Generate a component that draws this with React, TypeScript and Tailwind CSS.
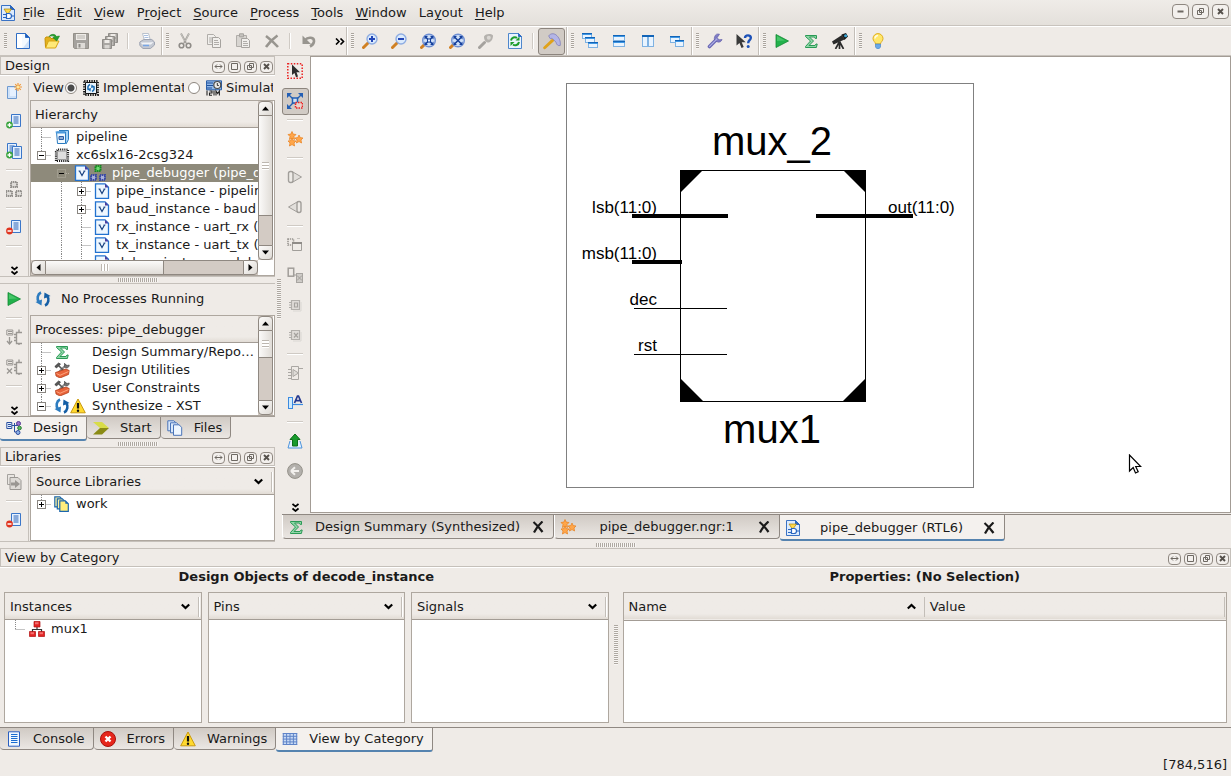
import React, { ReactNode } from "react";

type IconProps = { children: ReactNode; size?: string; box?: string };

function Svg({ children, size = "h-4 w-4", box = "0 0 16 16" }: IconProps) {
  return (
    <svg viewBox={box} className={`${size} block shrink-0`} fill="none" aria-hidden="true">
      {children}
    </svg>
  );
}

/* ---------- document and file icons ---------- */

const NewFile = () => (
  <Svg>
    <path d="M1.500.5h9l4 4v11h-13z" fill="#f4faff" stroke="#2f6dc4" />
    <path d="M2 1h5v14H2z" fill="#fff" />
    <path d="M8 15l6-8v8z" fill="#cfe2f8" />
    <path d="M10.500.5v4h4z" fill="#1d5fc0" stroke="#2f6dc4" />
  </Svg>
);
const OpenFolder = () => (
  <Svg>
    <path d="M1 5.500l1-1.500h4l1 1.500h5V14H1.500z" fill="#e3b21d" stroke="#c79006" />
    <path d="M1.500 15l3-7h10.500l-3.500 7z" fill="#ffe978" stroke="#d9a514" />
    <path d="M5 3.500C7.500.5 11 .8 12.500 3.500L15.500 3 12.800 8 8.800 4.500l2-.2C9.500 2.500 7.500 2.500 5 3.500z" fill="#25a02c" stroke="#14811c" strokeWidth=".6" />
  </Svg>
);
const Save = () => (
  <Svg>
    <path d="M.5.5h15v15h-14l-1-1z" fill="#a5a29e" stroke="#949089" />
    <path d="M3 1h10v6H3z" fill="#eeebe7" />
    <path d="M4 3h8M4 5h8" stroke="#b5b2ad" />
    <path d="M4 10h8v5.500H4z" fill="#dedbd7" />
    <path d="M5.500 11h2v3.500h-2z" fill="#8f8c88" />
  </Svg>
);
const Floppy = ({ x, y }: { x: number; y: number }) => (
  <g transform={`translate(${x} ${y})`}>
    <path d="M.5.5h9v9h-9z" fill="#a9a6a2" stroke="#8f8c88" />
    <path d="M2.500 1h5v3h-5z" fill="#eeebe7" />
    <path d="M2.500 6h5v3.500h-5z" fill="#d9d6d2" />
  </g>
);
const SaveAll = () => (
  <Svg>
    <Floppy x={6} y={0} />
    <Floppy x={3} y={3} />
    <Floppy x={0} y={6} />
  </Svg>
);
const Printer = () => (
  <Svg>
    <path d="M3.500.5h6l2 7h-6z" fill="#fff" stroke="#b9c1cc" />
    <path d="M5 2.500h4M5.500 4.500h4" stroke="#a9bfe0" />
    <path d="M.8 9l4-2.500h8l2.700 2.500v3l-4 3.500H4L.8 12.500z" fill="#c3c8d2" stroke="#9ea4b2" />
    <path d="M1.500 9.500h8.500l4.500-.5-2.500 2.500H3.500z" fill="#f1f3f7" />
    <path d="M4 12.500h6" stroke="#76a5e6" strokeWidth="1.500" />
  </Svg>
);
const Cut = () => (
  <Svg>
    <path d="M4 .5l5 9.500M12 .5L7 10" stroke="#a3a09c" strokeWidth="1.800" />
    <path d="M4 .5L7.500 8M12 .5L8.500 8" stroke="#d9d6d2" strokeWidth=".6" />
    <circle cx="4.500" cy="12.500" r="2.300" stroke="#8f8c88" strokeWidth="1.600" />
    <circle cx="11.500" cy="12.500" r="2.300" stroke="#8f8c88" strokeWidth="1.600" />
  </Svg>
);
const Copy = () => (
  <Svg>
    <path d="M1.500 1.500h6l2 2v8h-8z" fill="#f1efec" stroke="#b0ada9" />
    <path d="M3 5h4M3 7h3M3 9h3" stroke="#b0ada9" />
    <path d="M6.500 4.500h6l2 2v8h-8z" fill="#f1efec" stroke="#a6a39f" />
    <path d="M8 7.500h4M8 9.500h5M8 11.500h5" stroke="#b0ada9" />
  </Svg>
);
const Paste = () => (
  <Svg>
    <path d="M1.500 2.500h10v11h-10z" fill="#d8d5d1" stroke="#b0ada9" />
    <path d="M4.500.8h4v3h-4z" fill="#c6c3bf" stroke="#a6a39f" />
    <path d="M6.500 5.500h6l2 2v7h-8z" fill="#f1efec" stroke="#a6a39f" />
    <path d="M8 8.500h4M8 10.500h5M8 12.500h5" stroke="#b0ada9" />
  </Svg>
);
const DeleteX = () => (
  <Svg>
    <path d="M2 3c4 3 8 6.500 12 11M13.500 2.500C9 5.500 5.500 9 2 14" stroke="#98958f" strokeWidth="2.600" />
  </Svg>
);
const Undo = () => (
  <Svg>
    <path d="M4 7C7 3.500 13.500 4 13 8.500c-.3 2.500-2 4-4 5" stroke="#98958f" strokeWidth="2.600" />
    <path d="M1.500 2.500V11H10z" fill="#98958f" />
  </Svg>
);

/* ---------- magnifiers ---------- */

const Handle = ({ gray }: { gray?: boolean }) => (
  <path d="M1.500 14.500L6.500 9.500" stroke={gray ? "#a5a29e" : "#d08023"} strokeWidth="3" strokeLinecap="round" />
);
const ZoomIn = () => (
  <Svg>
    <Handle />
    <circle cx="10" cy="6" r="5" fill="#dbeafc" stroke="#8fade2" strokeWidth="1.400" />
    <path d="M10 3v6M7 6h6" stroke="#2347b8" strokeWidth="2" />
  </Svg>
);
const ZoomOut = () => (
  <Svg>
    <Handle />
    <circle cx="10" cy="6" r="5" fill="#dbeafc" stroke="#8fade2" strokeWidth="1.400" />
    <path d="M7 6h6" stroke="#2347b8" strokeWidth="2" />
  </Svg>
);
const ZoomFit = ({ small }: { small?: boolean }) => (
  <Svg>
    <path d="M1.500 14.500l2.500-2.500" stroke="#d08023" strokeWidth="3" strokeLinecap="round" />
    <circle cx="9" cy="7.500" r="6.300" fill="#cfe0f8" stroke="#6f8fd2" strokeWidth="1.400" />
    <path d="M5.500 4l7 7M12.500 4l-7 7" stroke="#16409c" strokeWidth="1.600" />
    <path d="M4.500 3h3.500l-3.500 3.500zM13.500 3v3.500L10 3zM4.500 12V8.500L8 12zM13.500 12H10l3.500-3.500z" fill="#16409c" />
    {!small && <path d="M7.500 6h3v3h-3z" fill="#e7f1ff" stroke="#16409c" />}
  </Svg>
);
const ZoomGray = () => (
  <Svg>
    <Handle gray />
    <path d="M6 3.500C8 .5 13 .5 15 2.500c0 3-1.500 6.500-4.500 7C8 9.500 6 7.500 6 3.500z" fill="#b5b2ae" />
    <circle cx="10.800" cy="4.800" r="2" fill="#dad7d3" />
  </Svg>
);
const RefreshDoc = () => (
  <Svg>
    <path d="M1.500.5h10l3 3v12h-13z" fill="#eaf4ff" stroke="#4f87cc" />
    <path d="M11.500.5v3h3z" fill="#2f6dc4" stroke="#2f6dc4" />
    <path d="M4 7.500C4.500 4.500 8 3.500 10 5M12 9c-.5 3-4 4-6 2.500" stroke="#1c9c2c" strokeWidth="2" />
    <path d="M8.500 7.500h4V3.500zM7.500 9h-4v4z" fill="#1c9c2c" />
  </Svg>
);
const Hammer = () => (
  <Svg size="h-[18px] w-[18px]">
    <path d="M1.500 14L8.500 7.500" stroke="#e0a21a" strokeWidth="2.600" strokeLinecap="round" />
    <path d="M5 3.500C6.500 1.200 9.500 1 11.500 2.500c2.500 2 4.500 5.500 3.800 9.500-1.700.5-3.300-.5-3.800-3L8 5.500 6.500 6z" fill="#b4b5e6" stroke="#7f7fb9" strokeWidth=".7" />
  </Svg>
);

/* ---------- window layout icons ---------- */

const Win = ({ x, y, w, h }: { x: number; y: number; w: number; h: number }) => (
  <g>
    <rect x={x + 0.5} y={y + 0.5} width={w - 1} height={h - 1} fill="#e9f4ff" stroke="#7fb2e2" />
    <rect x={x} y={y} width={w} height="2" fill="#1264b8" />
    <rect x={x} y={y + 1} width={w} height="1" fill="#3f97e4" />
  </g>
);
const Cascade = () => (
  <Svg>
    <Win x={0} y={0} w={10} h={6} />
    <Win x={3} y={4} w={10} h={6} />
    <Win x={6} y={9} w={10} h={6} />
  </Svg>
);
const TileH = () => (
  <Svg>
    <Win x={2} y={2} w={12} h={6} />
    <Win x={2} y={8} w={12} h={6} />
  </Svg>
);
const TileV = () => (
  <Svg>
    <Win x={2} y={2} w={6} h={12} />
    <Win x={8} y={2} w={6} h={12} />
    <path d="M2 3h12" stroke="#1264b8" strokeWidth="2" />
  </Svg>
);
const Float = () => (
  <Svg>
    <Win x={1} y={3} w={10} h={7} />
    <Win x={6} y={7} w={9} h={7} />
  </Svg>
);
const Wrench = () => (
  <Svg>
    <path d="M2.500 13.500L9.500 6.500" stroke="#6a68b4" strokeWidth="3.600" strokeLinecap="round" />
    <path d="M12.500 1.200a4 4 0 1 0 2.600 5.300l-3 .3-2-2z" fill="#7f7cc4" stroke="#5a58a6" strokeWidth=".6" />
    <path d="M2.500 13.300L10 5.800" stroke="#aeb0e6" strokeWidth="1.200" strokeLinecap="round" />
  </Svg>
);
const WhatsThis = () => (
  <Svg>
    <path d="M.5 1v11.500l3-2.500 2 5 2.200-1-2-4.800h4z" fill="#3a3a3a" />
    <path d="M9 5c.2-3.500 6-3.500 5.800 0-.2 2.300-2.600 2.200-2.600 5.200" stroke="#1c51b8" strokeWidth="2.400" />
    <circle cx="12.200" cy="13.500" r="1.500" fill="#1c51b8" />
  </Svg>
);
const Run = () => (
  <Svg>
    <path d="M2 1.500l12.500 6.500L2 14.500z" fill="#22b14c" stroke="#138a33" strokeWidth=".8" />
    <path d="M3 3l8 4.500L3 8z" fill="#55cf75" opacity=".7" />
  </Svg>
);
const Sigma = () => (
  <Svg>
    <path d="M2.500 2.500h11v3h-1.200L11.500 4H6.500l4 4-4.500 4.500h6l1-1.500h1.200l-.8 3.500H2.500v-1L7.500 8 2.500 3.500z" fill="#8fd6a8" stroke="#2a9a55" strokeWidth="1" />
  </Svg>
);
const Telescope = () => (
  <Svg>
    <path d="M0 8.500l10-6.500 2.500 4.500L1.500 11.500z" fill="#2b2b2b" />
    <path d="M9.500 1.500L14 0l2 3.500-3.500 3.500z" fill="#1a1a1a" />
    <circle cx="13.600" cy="2.800" r="1.500" fill="#3aa7d8" />
    <path d="M7.500 8.500l-4 7.500M7.500 8.500V16M7.500 8.500l4 7.500" stroke="#2b2b2b" strokeWidth="1.700" />
  </Svg>
);
const Bulb = () => (
  <Svg>
    <path d="M8 .6a5 5 0 0 0-5 5c0 2.400 2.300 3.400 2.600 5.400h4.800C10.700 9 13 8 13 5.600a5 5 0 0 0-5-5z" fill="#ffe76a" stroke="#e0ae1e" />
    <path d="M8 2.500a3 3 0 0 0-3 3" stroke="#fffbe0" strokeWidth="1.600" />
    <path d="M5.500 11h5v3l-1.500 1.800H7L5.500 14z" fill="#6aa9e8" stroke="#3b7cc4" strokeWidth=".6" />
  </Svg>
);

/* ---------- side toolbar icons ---------- */

const List = ({ x = 0, y = 0 }: { x?: number; y?: number }) => (
  <g transform={`translate(${x} ${y})`}>
    <path d="M.5.5h9v12h-9z" fill="#e6f1ff" stroke="#3a76c9" />
    <path d="M2.500 3h5M2.500 5h5M2.500 7h5M2.500 9h5" stroke="#2a63b5" />
  </g>
);
const NewSource = () => (
  <Svg>
    <path d="M1.500 3.500h9v12h-9z" fill="#cfe2f9" stroke="#6f9ad0" />
    <path d="M4 5h6v8H4z" fill="#e6f1ff" />
    <path d="M12 0v8M8 4h8M9.200 1.200l5.600 5.600M14.800 1.200L9.200 6.800" stroke="#f09a3c" strokeWidth="1.200" />
    <circle cx="12" cy="4" r="1.600" fill="#ffe9a0" />
  </Svg>
);
const Plus = () => (
  <g>
    <circle cx="3.500" cy="12" r="3.400" fill="#3ba53f" />
    <path d="M3.500 10v4M1.500 12h4" stroke="#fff" strokeWidth="1.300" />
  </g>
);
const AddSource = () => (
  <Svg>
    <List x={5} y={1} />
    <Plus />
  </Svg>
);
const AddCopy = () => (
  <Svg>
    <List x={1} y={0} />
    <List x={6} y={3} />
    <Plus />
  </Svg>
);
const RemoveSource = () => (
  <Svg>
    <List x={5} y={1} />
    <circle cx="3.500" cy="12" r="3.400" fill="#e0341f" />
    <path d="M1.500 12h4" stroke="#fff" strokeWidth="1.500" />
  </Svg>
);
const Modules = () => (
  <Svg>
    <path d="M5 1h6v5H5zM0 10h6v5H0zM10 10h6v5h-6z" fill="#dedbd7" stroke="#94918d" strokeWidth="2" strokeDasharray="1.400 .6" />
  </Svg>
);
const ChipArrow = ({ cross }: { cross?: boolean }) => (
  <Svg>
    <path d="M.8 1h6v5h-6z" stroke="#9a9793" />
    <path d="M2 2.500h4M2 4.500h4" stroke="#9a9793" />
    <path d={cross ? "M1 9.500l5 5M6 9.500l-5 5" : "M3.500 8v6M1 12l2.500 3L6 12"} stroke="#9a9793" strokeWidth="1.300" />
    <path d="M16 3.500h-5.500v11H16M8 5.500h2.500M8 8.500h2.500M8 11.500h2.500M13 3V.5M13 17v-2.500" stroke="#9a9793" strokeWidth="1.400" />
  </Svg>
);
const Recycle = () => (
  <Svg>
    <path d="M6 1.500C2.500 3 1.500 8 4 11.500" stroke="#2d7cc0" strokeWidth="2.600" />
    <path d="M.5 11l6 3.500.5-6z" fill="#2d7cc0" />
    <path d="M10 14.500c3.500-1.500 4.500-6.500 2-10" stroke="#155fa6" strokeWidth="2.600" />
    <path d="M15.500 5l-6-3.500-.5 6z" fill="#155fa6" />
  </Svg>
);
const CopyGray = () => (
  <Svg>
    <path d="M1.500.5h7v10h-7z" fill="#e9e6e2" stroke="#a5a29e" />
    <path d="M4 3.500h8l3 3v9H4z" fill="#dedbd7" stroke="#9a9793" />
    <path d="M5 8.500h4V6l5 4-5 4v-2.500H5z" fill="#9a9793" />
  </Svg>
);
const SelectCursor = () => (
  <Svg>
    <rect x=".8" y=".8" width="14.400" height="14.400" stroke="#ea2323" strokeWidth="1.500" strokeDasharray="1.500 1.500" />
    <path d="M5 1.500v10.500l2.500-2 1.500 4.200 2-.8-1.500-4.200H13z" fill="#2d2d2d" />
  </Svg>
);
const SelectNet = () => (
  <Svg>
    <path d="M2 2l12 12M14 2L2 14" stroke="#235fb4" strokeWidth="1.400" />
    <path d="M0 0h5L0 5zM16 0v5l-5-5zM0 16v-5l5 5z" fill="#235fb4" />
    <path d="M5.500 5h5v5h-5z" fill="#cfe0f5" stroke="#235fb4" strokeWidth="1.500" />
    <rect x="8.500" y="9.500" width="7" height="5.500" fill="#e8d2cc" stroke="#ea2323" strokeWidth="1.500" strokeDasharray="1.500 1" />
  </Svg>
);
const Star = ({ x, y }: { x: number; y: number }) => (
  <path transform={`translate(${x} ${y})`} d="M4 0l1.200 2.600L8 3 6 5l.6 3L4 6.600 1.400 8 2 5 0 3l2.800-.4z" fill="#ffa64a" stroke="#e8801c" strokeWidth=".7" />
);
const Stars = () => (
  <Svg>
    <Star x={1} y={0.500} />
    <Star x={8} y={4} />
    <Star x={1} y={7} />
  </Svg>
);
const GateOut = () => (
  <Svg>
    <path d="M5 2.500l9.500 5.500L5 13.500z" fill="#e2dfdb" stroke="#a19e9a" />
    <rect x="1.500" y="2.500" width="4.500" height="11" rx="2" fill="#eeebe7" stroke="#a19e9a" strokeWidth="1.400" />
  </Svg>
);
const GateIn = () => (
  <Svg>
    <path d="M11 2.500L1.500 8l9.500 5.500z" fill="#e2dfdb" stroke="#a19e9a" />
    <rect x="10" y="2.500" width="4" height="11" rx="2" fill="#eeebe7" stroke="#a19e9a" strokeWidth="1.400" />
  </Svg>
);
const PushIn = () => (
  <Svg>
    <rect x="1" y="2" width="5.500" height="6" stroke="#9a9793" strokeWidth="1.600" strokeDasharray="1.200 .8" />
    <path d="M5.500 5.500h9v8h-9z" fill="#efece8" stroke="#a19e9a" />
    <path d="M5 6h10" stroke="#8f8c88" strokeWidth="2" />
    <path d="M10 1.500h3" stroke="#c4c1bd" />
  </Svg>
);
const PopOut = () => (
  <Svg>
    <rect x="1.200" y="1.200" width="5.500" height="8" stroke="#a19e9a" strokeWidth="1.500" />
    <rect x="9.500" y="6.500" width="6" height="9" fill="#cfccc8" stroke="#a8a5a1" />
    <path d="M10 8.500l5 5M15 8.500l-5 5M7 8h2" stroke="#a19e9a" />
  </Svg>
);
const Chip = ({ cross }: { cross?: boolean }) => (
  <Svg>
    <path d="M4.500 3.500h8v9h-8z" fill="#dfdcd8" stroke="#b2afab" strokeWidth="1.200" />
    <path d="M2 5.500h3M2 8h3M2 10.500h3" stroke="#b0ada9" />
    <path d={cross ? "M7 6l4 4.500M11 6l-4 4.500" : "M7.500 6h3v4h-3z"} stroke="#a5a29e" strokeWidth="1.200" />
    <path d="M14 5v9H6" stroke="#dad7d3" />
  </Svg>
);
const Buffer = () => (
  <Svg>
    <path d="M4.500 1.500h7v13h-7z" stroke="#aaa7a3" />
    <path d="M6 4.500l5.500 3.500L6 11.500z" fill="#dfdcd8" stroke="#aaa7a3" />
    <path d="M1 4.500h3M1 7.500h3M1 10.500h3M1 13.500h3M12 3.500h4" stroke="#aaa7a3" />
  </Svg>
);
const LabelPin = () => (
  <Svg>
    <rect x="1.500" y="2.500" width="4" height="11" fill="#cfeafd" stroke="#3a8ae0" />
    <path d="M6 9.500h10" stroke="#3a8ae0" strokeWidth="1.200" />
    <path d="M7.500 8L10.500 1h1l3 7M8.800 5.700h4.400" stroke="#24388f" strokeWidth="1.700" />
  </Svg>
);
const UpArrow = () => (
  <Svg>
    <path d="M3 8l-2 7h14l-2-7" fill="#e6f1ff" stroke="#4d94dc" />
    <path d="M8 1l5 5.500h-2.500V13h-5V6.500H3z" fill="#189a2c" stroke="#0c6e1b" />
  </Svg>
);
const Back = () => (
  <Svg>
    <circle cx="8" cy="8" r="7.400" fill="#b3b0ac" stroke="#949189" />
    <path d="M4 8l4-3.800M4 8l4 3.800M4 8h8" stroke="#f2f0ed" strokeWidth="2" />
  </Svg>
);

/* ---------- tree and tab icons ---------- */

const AppIcon = () => (
  <Svg>
    <path d="M1.500.5h9l4 4v11h-13z" fill="#dcebfd" stroke="#3a72c4" />
    <path d="M10.500.5v4h4z" fill="#2a66c0" stroke="#2a66c0" />
    <path d="M4 4h7.500L7.700 9.500z" fill="#ffd84a" stroke="#a88413" strokeWidth=".7" />
    <path d="M3 9.500h3M3 12.500h4M10 11h4" stroke="#2a66c0" strokeWidth="1.200" />
    <path d="M6.500 8.500h2.500a2.500 2.500 0 0 1 0 5H6.500z" fill="#fff" stroke="#2a66c0" strokeWidth="1.200" />
  </Svg>
);
const Project = () => (
  <Svg>
    <path d="M5 1.500h9.500v9L12 15" fill="#a4d2f7" stroke="#2a7bc0" />
    <path d="M2.500 3h9v11.500h-8z" fill="#f2f9ff" stroke="#2a7bc0" />
    <path d="M1.500 2.500h9l1.500 2H2z" fill="#4b9add" />
    <path d="M5 7.500h4.500v3H5zM5 9h4" stroke="#2a5ea8" />
  </Svg>
);
const DeviceChip = () => (
  <Svg>
    <path d="M4 2.500h10V14H2V4.500z" stroke="#1c1c1c" strokeWidth="2.200" strokeDasharray="1.100 1" />
    <path d="M4.500 4h8v8.500h-9V5z" fill="#dedede" stroke="#777" strokeWidth=".7" />
  </Svg>
);
const Verilog = () => (
  <Svg>
    <path d="M1.500.8h9.500l3.500 3.500v11h-13z" fill="#eef7ff" stroke="#2272cf" strokeWidth="1.300" />
    <path d="M11 .8v3.700h3.500z" fill="#4d3d9c" />
    <path d="M5.500 6L8 10.500 10.500 6" stroke="#16407f" strokeWidth="1.200" />
    <path d="M4.500 6h2M9.500 6h2" stroke="#16407f" strokeWidth=".8" />
  </Svg>
);
const TopModule = () => (
  <Svg>
    <path d="M5.500 1h5v5h-5z" fill="#6ddc72" stroke="#128a1e" strokeWidth="2" strokeDasharray="1.400 .6" />
    <path d="M1 10h5v5H1zM10 10h5v5h-5z" fill="#a9b0d8" stroke="#3a4aa6" strokeWidth="2" strokeDasharray="1.400 .6" />
  </Svg>
);
const Tools = () => (
  <Svg>
    <path d="M5 10L12.500 2.500" stroke="#8b8b8b" strokeWidth="2" />
    <path d="M10.500 1.200l1.700 2.500 3-.7c0 2.800-2.700 3.700-4.500 2.300z" fill="#777" stroke="#3b3b3b" strokeWidth=".6" />
    <path d="M4.500 3.500l6 6" stroke="#555" strokeWidth="1.600" />
    <path d="M.8 4.500L4.500 1l2 1-4 4z" fill="#5a5a5a" stroke="#222" strokeWidth=".6" />
    <path d="M1.500 10.500l10.500-3.500 3.200 1.500-.7 4L6 16l-4-2z" fill="#e8633a" stroke="#a9340f" strokeWidth=".7" />
    <path d="M2.500 11.500l3.500 1.800 8.500-3.800" stroke="#ffab86" strokeWidth=".9" />
  </Svg>
);
const Warning = () => (
  <Svg>
    <path d="M8 1L15.300 14.800H.7z" fill="#ffd92e" stroke="#c99a10" strokeLinejoin="round" />
    <path d="M8 5v5.500" stroke="#111" strokeWidth="2.200" />
    <circle cx="8" cy="12.800" r="1.200" fill="#111" />
  </Svg>
);
const ImplChip = () => (
  <Svg>
    <rect x="1.200" y="1.200" width="13.600" height="13.600" stroke="#161616" strokeWidth="2.200" strokeDasharray="1.300 1.100" />
    <path d="M2.500 2.500h11v11h-11z" fill="#e8f3fc" stroke="#161616" />
    <path d="M7 4.500C4.500 5.500 4.500 8 5.500 10M9 11.500c2.500-1 2.500-3.500 1.500-5.500" stroke="#1f6fb5" strokeWidth="1.600" />
    <path d="M4 9l3.500 2.500.5-3.500zM12 7L8.500 4.500 8 8z" fill="#1f6fb5" />
  </Svg>
);
const SimIcon = () => (
  <Svg>
    <path d="M.5.8h15v9H.5z" fill="#8fb7e8" stroke="#2b5fa8" />
    <path d="M1 3h6M1 5.500h6M1 8h5" stroke="#1e4f9c" strokeWidth="1.200" />
    <circle cx="11.300" cy="5" r="3.500" fill="#e9e9e9" stroke="#4b4b4b" strokeWidth="1.200" />
    <path d="M11.300 3v2.500h1.500" stroke="#333" />
    <path d="M1 10.500v5M3.500 11h2.500v2H3.500v2.200h2.500M8 10.500v5M10 15.500v-4.500l1.700 2.500 1.700-2.500v4.500" stroke="#222" strokeWidth="1.100" />
  </Svg>
);
const DesignTabIcon = () => (
  <Svg>
    <path d="M.8 2.500h5v6h-5z" fill="#e6f1ff" stroke="#2a4f9f" />
    <path d="M2 4.500h3M2 6.500h3M6 5.500h6M8.500 3v9h4" stroke="#2a4f9f" />
    <circle cx="12.500" cy="3.500" r="2" fill="#9a6fd0" stroke="#543a91" />
    <circle cx="13.500" cy="8" r="1.800" fill="#5fc05f" stroke="#2a7a35" />
    <circle cx="12" cy="12.500" r="2" fill="#8fb2e6" stroke="#2f4d9e" />
  </Svg>
);
const StartIcon = () => (
  <Svg>
    <path d="M0 2h9l7 6H7z" fill="#d8dc48" />
    <path d="M7 8h9l-7 6.500H0z" fill="#8a8b15" />
  </Svg>
);
const FilesIcon = () => (
  <Svg>
    <path d="M.8.8h6l2.200 2v8H.8z" fill="#d9e8fb" stroke="#4a74b8" />
    <path d="M3.500 2.800h6l2.200 2v8H3.500z" fill="#d9e8fb" stroke="#4a74b8" />
    <path d="M6.500 4.800h5.500l2.700 2.500v8H6.500z" fill="#eef6ff" stroke="#4a74b8" />
  </Svg>
);
const LibIcon = () => (
  <Svg>
    <path d="M.8.8h5l2 2v8h-7z" fill="#fff2a0" stroke="#1b66ad" strokeWidth="1.200" />
    <path d="M3.300 2.800h5l2 2v8h-7z" fill="#fff2a0" stroke="#1b66ad" strokeWidth="1.200" />
    <path d="M5.800 4.800h5.500l3 3v7.500H5.800z" fill="#ffee7c" stroke="#1b66ad" strokeWidth="1.200" />
    <path d="M11.300 4.800v3h3z" fill="#1b66ad" />
  </Svg>
);
const Instance = () => (
  <Svg>
    <path d="M8 5v4M3.500 11V8.500h9V11" stroke="#333" strokeWidth="1.200" />
    <path d="M5 .5h6v5.500H5zM.5 10.500h6v5h-6zM9.500 10.500h6v5h-6z" fill="#e32424" stroke="#b00f0f" strokeWidth=".7" />
    <path d="M6 1.200h3.500v2H6zM1.500 11.200H5v2H1.500zM10.500 11.200H14v2h-3.500z" fill="#f27070" />
  </Svg>
);
const ConsoleIcon = () => (
  <Svg>
    <path d="M2.500.8h11v14.400h-11z" fill="#f0f8ff" stroke="#2b5fc0" />
    <path d="M5 3.500h6.500M5 5.500h6.500M5 7.500h6.500M5 9.500h6.500M5 11.500h6.500" stroke="#1a6cd0" strokeWidth="1.200" />
  </Svg>
);
const ErrorIcon = () => (
  <Svg>
    <circle cx="8" cy="8" r="7.500" fill="#e6261b" stroke="#a80f0a" />
    <path d="M5.500 5.500l5 5M10.500 5.500l-5 5" stroke="#fff" strokeWidth="2.400" />
  </Svg>
);
const GridIcon = () => (
  <Svg>
    <path d="M.8 2h14.400v12H.8z" fill="#c9dbf5" />
    <path d="M.8 2.500h14.400M.8 5.300h14.400M.8 8.100h14.400M.8 10.900h14.400M.8 13.500h14.400M1.300 2v12M4.600 2v12M8 2v12M11.400 2v12M14.700 2v12" stroke="#5f84c8" />
  </Svg>
);

/* ---------- shared pieces ---------- */

function Tool({ label, active, children }: { label: string; active?: boolean; children: ReactNode }) {
  return (
    <button
      aria-label={label}
      className={`flex h-[27px] w-[27px] shrink-0 items-center justify-center ${
        active ? "rounded-[3px] border border-[#8c857e] bg-[#d1cbc5]" : ""
      }`}
    >
      {children}
    </button>
  );
}

function ToolGroup({ last, children }: { last?: boolean; children: ReactNode }) {
  return (
    <div className={`flex h-full items-center gap-[2px] ${last ? "" : "border-r border-r-[#c3beb8] pr-px shadow-[1px_0_0_#fff]"}`}>
      <div className="ml-[4px] h-4 w-[3px] bg-[repeating-linear-gradient(to_bottom,#aaa49d_0_1px,#f8f6f4_1px_2px)]" />
      {children}
    </div>
  );
}

const ToolSep = () => <div className="mx-[2px] h-4 w-[2px] border-l border-[#cfcac4] bg-white" />;
const StripSep = () => <div className="my-[3px] h-[2px] w-4 shrink-0 border-t border-[#cfcac4] bg-white" />;

function StripTool({ label, active, children }: { label: string; active?: boolean; children: ReactNode }) {
  return (
    <div className="flex h-[30px] shrink-0 items-center justify-center">
      <Tool label={label} active={active}>
        {children}
      </Tool>
    </div>
  );
}

const MoreDown = () => (
  <button aria-label="More tools" className="mt-auto mb-px">
    <Svg size="h-[9px] w-[7px]" box="0 0 7 9">
      <path d="M.5 1l3 2.500L6.500 1M.5 5.500l3 2.500 3-2.500" stroke="#000" strokeWidth="1.700" />
    </Svg>
  </button>
);

const titleGlyphs: Record<string, ReactNode> = {
  Dock: <path d="M3 5.500h7M5 3.500l-2 2 2 2M8 3.500l2 2-2 2" stroke="#6d6862" />,
  Maximize: <path d="M3.500 2.500h6v6h-6z" stroke="#6d6862" />,
  Undock: <path d="M5.500 2.500h4v4h-4zM3.500 4.500h4v4h-4z" stroke="#6d6862" />,
  Close: <path d="M4 3l5 5M9 3L4 8" stroke="#55504b" strokeWidth="1.900" />,
  Minimize: <path d="M3.500 5.500h6" stroke="#6d6862" strokeWidth="2" />,
};

function TitleButton({ name, large }: { name: string; large?: boolean }) {
  return (
    <button
      aria-label={name}
      className={`flex items-center justify-center rounded-[4px] border border-[#8e8780] bg-[#f3f0ed] ${
        large ? "h-[15px] w-[17px]" : "h-[12px] w-[13px]"
      }`}
    >
      <Svg size="h-[11px] w-[13px]" box="0 0 13 11">
        {titleGlyphs[name]}
      </Svg>
    </button>
  );
}

function DockTitle({ children }: { children: ReactNode }) {
  return (
    <div className="flex h-[19px] shrink-0 items-center border border-[#c5c0ba] pr-px pl-1 shadow-[0_1px_0_#fff]">
      <h2 className="flex-1 leading-[17px]">{children}</h2>
      <div className="flex gap-[3px] pt-[2px]">
        {["Dock", "Maximize", "Undock", "Close"].map((n) => (
          <TitleButton key={n} name={n} />
        ))}
      </div>
    </div>
  );
}

const GripH = () => (
  <div className="flex h-[6px] shrink-0 items-center justify-center">
    <div className="h-1 w-10 bg-[repeating-linear-gradient(to_right,#aea8a1_0_1px,#f8f6f4_1px_2px)]" />
  </div>
);
const GripV = () => (
  <div className="flex w-[6px] shrink-0 items-center justify-center">
    <div className="h-10 w-1 bg-[repeating-linear-gradient(to_bottom,#aea8a1_0_1px,#f8f6f4_1px_2px)]" />
  </div>
);

const scrollBtn =
  "flex h-[15px] w-[15px] shrink-0 items-center justify-center border border-[#8f8881] bg-linear-to-br from-[#fdfcfb] to-[#dedad5]";

function Arrow({ d }: { d: string }) {
  return (
    <Svg size="h-[9px] w-[9px]" box="0 0 9 9">
      <path d={d} fill="#000" />
    </Svg>
  );
}

function VScroll({ thumb }: { thumb: string }) {
  return (
    <div className="flex w-[15px] shrink-0 flex-col bg-[#d3cbc4]">
      <button aria-label="Scroll up" className={`${scrollBtn} rounded-t-[4px]`}>
        <Arrow d="M1 6.500l3.500-4 3.500 4z" />
      </button>
      <div className="flex flex-1 flex-col border-x border-[#8f8881]">
        <div className={`${thumb} flex items-center justify-center border-b border-[#8f8881] bg-linear-to-r from-[#fbfaf9] to-[#e0dcd7]`}>
          <div className="h-2 w-[7px] bg-[repeating-linear-gradient(to_bottom,#bdb7b0_0_1px,#fff_1px_3px)]" />
        </div>
      </div>
      <button aria-label="Scroll down" className={`${scrollBtn} rounded-b-[4px]`}>
        <Arrow d="M1 2.500l3.500 4 3.500-4z" />
      </button>
    </div>
  );
}

function HScroll() {
  return (
    <div className="flex h-[15px] shrink-0 bg-[#d3cbc4]">
      <button aria-label="Scroll left" className={`${scrollBtn} rounded-l-[4px]`}>
        <Arrow d="M6.500 1l-4 3.500 4 3.500z" />
      </button>
      <div className="flex flex-1 border-y border-[#8f8881]">
        <div className="flex w-3/5 items-center justify-center border-r border-[#8f8881] bg-linear-to-b from-[#fbfaf9] to-[#e0dcd7]">
          <div className="h-[7px] w-2 bg-[repeating-linear-gradient(to_right,#bdb7b0_0_1px,#fff_1px_3px)]" />
        </div>
      </div>
      <button aria-label="Scroll right" className={`${scrollBtn} rounded-r-[4px]`}>
        <Arrow d="M2.500 1l4 3.500-4 3.500z" />
      </button>
    </div>
  );
}

function Branch({ lines, box }: { lines: string; box?: "+" | "-" }) {
  const paths: Record<string, string> = { u: "M10.500 0v9", d: "M10.500 9v9", r: "M10.500 9.500h9" };
  return (
    <Svg size="h-[18px] w-5" box="0 0 20 18">
      {lines.split("").map((l) => (
        <path key={l} d={paths[l]} stroke="#8a8a8a" strokeDasharray="1 1" />
      ))}
      {box && <rect x="6.500" y="5.500" width="8" height="8" fill="#fff" stroke="#8a8681" />}
      {box && <path d={box === "+" ? "M8 9.500h5M10.500 7v5" : "M8 9.500h5"} stroke="#000" />}
    </Svg>
  );
}

const header =
  "flex h-[27px] shrink-0 items-center border-b border-[#a39c95] bg-linear-to-b from-[#efebe7] from-80% to-[#e2dcd5] pt-px text-left";

function DownMark() {
  return (
    <Svg size="h-[7px] w-[9px]" box="0 0 9 7">
      <path d="M.8 1.500l3.700 3.500L8.200 1.500" stroke="#000" strokeWidth="2.200" />
    </Svg>
  );
}

function SortHeader({ children }: { children: ReactNode }) {
  return (
    <button className={`${header} w-full pr-px pl-[5px]`}>
      <span className="flex-1">{children}</span>
      <span className="pr-2">
        <DownMark />
      </span>
      <span className="h-5 w-[2px] border-l border-[#c3beb8] bg-white" />
    </button>
  );
}

const frame = "flex min-h-0 min-w-0 flex-col border border-[#aea79f] bg-white";

function Tab({ icon, active, children }: { icon: ReactNode; active?: boolean; children: ReactNode }) {
  return (
    <button
      role="tab"
      aria-selected={!!active}
      className={`flex items-center gap-[11px] pr-2 pl-[6px] ${
        active
          ? "h-[24px] rounded-b-[3px] border-r border-b-2 border-r-[#8f8882] border-b-[#5583af] bg-[#f4f1ee]"
          : "h-[22px] rounded-b-[4px] border-r border-b border-[#8f8882] bg-linear-to-b from-[#d0cac4] to-[#ebe7e3]"
      }`}
    >
      {icon}
      <span>{children}</span>
    </button>
  );
}

function DocTab({ icon, active, children }: { icon: ReactNode; active?: boolean; children: ReactNode }) {
  return (
    <div
      className={`flex items-center pr-[9px] pl-[5px] ${
        active
          ? "h-[26px] rounded-b-[3px] border-r border-b-2 border-r-[#8f8882] border-b-[#5583af] bg-[#f4f1ee] pt-px"
          : "h-[24px] rounded-b-[4px] border-r border-b border-l border-[#8f8882] border-l-white bg-linear-to-b from-[#d0cac4] to-[#ebe7e3]"
      }`}
    >
      <button role="tab" aria-selected={!!active} className="flex items-center">
        {icon}
        <span className="min-w-[182px] pr-3 pl-[11px]">{children}</span>
      </button>
      <button aria-label="Close tab">
        <Svg size="h-3 w-3" box="0 0 12 12">
          <path d="M1.500 1C5 4 8 7.500 10.500 11M10.500.5C7 3.500 4 7.500 2 11.500" stroke="#1a1a1a" strokeWidth="2.200" />
        </Svg>
      </button>
    </div>
  );
}

/* ---------- page sections ---------- */

const menus: [string, string, string][] = [
  ["", "F", "ile"],
  ["", "E", "dit"],
  ["", "V", "iew"],
  ["P", "r", "oject"],
  ["", "S", "ource"],
  ["", "P", "rocess"],
  ["", "T", "ools"],
  ["", "W", "indow"],
  ["La", "y", "out"],
  ["", "H", "elp"],
];

function MenuBar() {
  return (
    <nav className="flex h-[26px] shrink-0 items-center border-b border-[#c8c3bd] bg-linear-to-b from-[#efece8] to-[#e4e0db] pt-px pr-[2px]">
      <AppIcon />
      <div className="flex flex-1 gap-3 pl-[7px]">
        {menus.map(([a, k, b]) => (
          <button key={a + k + b}>
            {a}
            <span className="underline underline-offset-2">{k}</span>
            {b}
          </button>
        ))}
      </div>
      <div className="mb-1 flex gap-[3px]">
        <TitleButton name="Minimize" large />
        <TitleButton name="Undock" large />
        <TitleButton name="Close" large />
      </div>
    </nav>
  );
}

function ToolBar() {
  return (
    <div className="flex h-[30px] shrink-0 border-t border-b border-t-white border-b-[#c8c3bd]">
      <ToolGroup>
        <Tool label="New"><NewFile /></Tool>
        <Tool label="Open"><OpenFolder /></Tool>
        <Tool label="Save"><Save /></Tool>
        <Tool label="Save all"><SaveAll /></Tool>
        <ToolSep />
        <Tool label="Print"><Printer /></Tool>
      </ToolGroup>
      <ToolGroup>
        <Tool label="Cut"><Cut /></Tool>
        <Tool label="Copy"><Copy /></Tool>
        <Tool label="Paste"><Paste /></Tool>
        <Tool label="Delete"><DeleteX /></Tool>
        <ToolSep />
        <Tool label="Undo"><Undo /></Tool>
        <button aria-label="More tools" className="pl-[11px]">
          <Svg size="h-[7px] w-[10px]" box="0 0 10 7">
            <path d="M1 .5l3 3-3 3M5.500.5l3 3-3 3" stroke="#000" strokeWidth="1.600" />
          </Svg>
        </button>
      </ToolGroup>
      <ToolGroup>
        <Tool label="Zoom in"><ZoomIn /></Tool>
        <Tool label="Zoom out"><ZoomOut /></Tool>
        <Tool label="Zoom to full view"><ZoomFit /></Tool>
        <Tool label="Zoom to selection"><ZoomFit small /></Tool>
        <Tool label="Zoom to box"><ZoomGray /></Tool>
        <Tool label="Refresh"><RefreshDoc /></Tool>
        <ToolSep />
        <Tool label="Build" active><Hammer /></Tool>
      </ToolGroup>
      <ToolGroup>
        <Tool label="Cascade"><Cascade /></Tool>
        <Tool label="Tile horizontally"><TileH /></Tool>
        <Tool label="Tile vertically"><TileV /></Tool>
        <Tool label="Float"><Float /></Tool>
      </ToolGroup>
      <ToolGroup>
        <Tool label="Preferences"><Wrench /></Tool>
        <Tool label="What's this"><WhatsThis /></Tool>
      </ToolGroup>
      <ToolGroup>
        <Tool label="Run"><Run /></Tool>
        <Tool label="Design summary"><Sigma /></Tool>
        <Tool label="Analyze"><Telescope /></Tool>
      </ToolGroup>
      <ToolGroup last>
        <Tool label="Tips"><Bulb /></Tool>
      </ToolGroup>
    </div>
  );
}

const strip = "flex w-[28px] shrink-0 flex-col items-center";
const radio =
  "h-3 w-3 shrink-0 appearance-none rounded-full border border-[#8d867f] bg-white checked:bg-[radial-gradient(circle,#4a4a4a_0_3px,#fff_4px)]";

const instances: { name: string; lines: string; box?: "+" }[] = [
  { name: "pipe_instance - pipeline (pipeline.v)", lines: "udr", box: "+" },
  { name: "baud_instance - baud (baud.v)", lines: "udr", box: "+" },
  { name: "rx_instance - uart_rx (uart_rx.v)", lines: "udr" },
  { name: "tx_instance - uart_tx (uart_tx.v)", lines: "udr" },
  { name: "debug_instance - debug (debug.v)", lines: "udr" },
];

function Hierarchy() {
  return (
    <div className={`${frame} flex-1`}>
      <div className="flex min-h-0 flex-1 pr-px">
        <div className="flex min-w-0 flex-1 flex-col">
          <div className={`${header} pl-1`}>Hierarchy</div>
          <ul role="tree" className="flex-1 overflow-hidden whitespace-nowrap">
            <li className="flex h-[18px] items-center">
              <Branch lines="udr" />
              <span className="mr-[6px] ml-[3px]"><Project /></span>pipeline
            </li>
            <li className="flex h-[18px] items-center">
              <Branch lines="ur" box="-" />
              <span className="mr-[6px] ml-[3px]"><DeviceChip /></span>xc6slx16-2csg324
            </li>
            <li className="flex h-[18px] items-center bg-[#8e8a7b] pl-5 text-white">
              <Svg size="h-[18px] w-5" box="0 0 20 18">
                <path d="M15 9.500h4" stroke="#b5b1a4" strokeDasharray="1 1" />
                <rect x="6.500" y="5.500" width="8" height="8" fill="#8e8a7b" stroke="#a19d8f" />
                <path d="M8 9.500h5" stroke="#000" />
              </Svg>
              <span className="mr-[6px] ml-[3px] flex"><Verilog /><TopModule /></span>
              pipe_debugger (pipe_debugger.v)
            </li>
            {instances.map((i) => (
              <li key={i.name} className="flex h-[18px] items-center pl-5">
                <Branch lines="ud" />
                <Branch lines={i.lines} box={i.box} />
                <span className="mr-[6px] ml-[3px]"><Verilog /></span>
                {i.name}
              </li>
            ))}
          </ul>
          <HScroll />
        </div>
        <div className="flex pb-[15px]">
          <VScroll thumb="h-[100px]" />
        </div>
      </div>
    </div>
  );
}

const processes: { name: string; icon: ReactNode; extra?: ReactNode; box?: "+" | "-" }[] = [
  { name: "Design Summary/Reports", icon: <Sigma /> },
  { name: "Design Utilities", icon: <Tools />, box: "+" },
  { name: "User Constraints", icon: <Tools />, box: "+" },
  { name: "Synthesize - XST", icon: <Recycle />, extra: <Warning />, box: "-" },
];

function LeftDock() {
  return (
    <aside className="flex w-[276px] shrink-0 flex-col pr-px">
      <DockTitle>Design</DockTitle>
      <section className="mt-px flex h-[201px] shrink-0 border-b border-[#c5c0ba]">
        <div className={strip}>
          <StripTool label="New source"><NewSource /></StripTool>
          <StripTool label="Add source"><AddSource /></StripTool>
          <StripTool label="Add copy of source"><AddCopy /></StripTool>
          <StripSep />
          <StripTool label="Modules"><Modules /></StripTool>
          <StripSep />
          <StripTool label="Remove source"><RemoveSource /></StripTool>
          <StripSep />
          <MoreDown />
        </div>
        <div className="flex min-w-0 flex-1 flex-col border-l border-[#c5c0ba] pl-px">
          <div className="flex h-6 shrink-0 items-center pl-[3px]">
            <span className="w-8">View</span>
            <label className="flex w-[123px] items-center overflow-hidden whitespace-nowrap">
              <input type="radio" name="view" defaultChecked className={radio} />
              <span className="mr-[4px] ml-[6px]"><ImplChip /></span>
              <span className="mr-[4px] overflow-hidden">Implementation</span>
            </label>
            <label className="flex min-w-0 flex-1 items-center overflow-hidden whitespace-nowrap">
              <input type="radio" name="view" className={radio} />
              <span className="mr-[4px] ml-[6px]"><SimIcon /></span>
              <span className="mr-[2px] overflow-hidden">Simulation</span>
            </label>
          </div>
          <Hierarchy />
        </div>
      </section>
      <GripH />
      <section className="flex h-[133px] shrink-0 border-t border-[#c5c0ba]">
        <div className={strip}>
          <StripTool label="Run process"><Run /></StripTool>
          <StripSep />
          <StripTool label="Implement"><ChipArrow /></StripTool>
          <StripTool label="Stop"><ChipArrow cross /></StripTool>
          <StripSep />
          <MoreDown />
        </div>
        <div className="flex min-w-0 flex-1 flex-col border-l border-[#c5c0ba] pl-px">
          <div className="flex h-[31px] shrink-0 items-center gap-[10px] pb-[2px] pl-[5px]">
            <Recycle />
            No Processes Running
          </div>
          <div className={`${frame} flex-1`}>
            <div className="flex min-h-0 flex-1 pr-px">
              <div className="flex min-w-0 flex-1 flex-col">
                <div className={`${header} pl-1`}>Processes: pipe_debugger</div>
                <ul role="tree" className="flex-1 overflow-hidden">
                  {processes.map((p, i) => (
                    <li key={p.name} className="flex h-[18px] items-center pr-1">
                      <Branch lines={i === 3 ? "ur" : "udr"} box={p.box} />
                      <span className="ml-[3px] flex w-[38px] shrink-0">{p.icon}{p.extra}</span>
                      <span className="truncate">{p.name}</span>
                    </li>
                  ))}
                </ul>
              </div>
              <VScroll thumb="h-[27px]" />
            </div>
          </div>
        </div>
      </section>
      <div role="tablist" className="flex h-[25px] shrink-0 items-start border-t border-[#a39c95]">
        <Tab icon={<DesignTabIcon />} active>Design</Tab>
        <Tab icon={<StartIcon />}>Start</Tab>
        <Tab icon={<FilesIcon />}>Files</Tab>
      </div>
      <GripH />
      <DockTitle>Libraries</DockTitle>
      <section className="mt-px flex min-h-0 flex-1 border-b border-[#c5c0ba]">
        <div className={strip}>
          <StripTool label="Move to library"><CopyGray /></StripTool>
          <StripSep />
          <StripTool label="Remove library"><RemoveSource /></StripTool>
        </div>
        <div className="flex min-w-0 flex-1 flex-col border-l border-[#c5c0ba] pl-px">
          <div className={`${frame} flex-1`}>
            <SortHeader>Source Libraries</SortHeader>
            <ul role="tree">
              <li className="flex h-[18px] items-center">
                <Branch lines="ur" box="+" />
                <span className="mr-[6px] ml-[3px]"><LibIcon /></span>work
              </li>
            </ul>
          </div>
        </div>
      </section>
    </aside>
  );
}

function Schematic() {
  return (
    <svg width="409" height="406" viewBox="0 0 409 406" role="img" aria-label="mux_2 schematic symbol" className="shrink-0">
      <rect x=".5" y=".5" width="407" height="404" fill="#fff" stroke="#808080" />
      <rect x="114.500" y="87.500" width="185" height="231" fill="none" stroke="#000" />
      <path d="M114 87h23l-23 23zM300 87v23l-23-23zM114 319v-24l24 24zM300 319h-24l24-24z" fill="#000" />
      <path d="M66 133h96M66 179h50M250 133h97" stroke="#000" strokeWidth="4" />
      <path d="M68 225.500h93M68 271.500h93" stroke="#000" />
      <g fill="#000" className="font-['Liberation_Sans',Arial,sans-serif]">
        <g fontSize="40" textAnchor="middle">
          <text x="206" y="72">mux_2</text>
          <text x="206" y="360">mux1</text>
        </g>
        <g fontSize="17" textAnchor="end">
          <text x="91" y="130">lsb(11:0)</text>
          <text x="91" y="176">msb(11:0)</text>
          <text x="91" y="222">dec</text>
          <text x="91" y="268">rst</text>
        </g>
        <text x="322" y="130" fontSize="17">out(11:0)</text>
      </g>
    </svg>
  );
}

function Workspace() {
  return (
    <main className="flex min-w-0 flex-1 flex-col">
      <div className="flex min-h-0 flex-1">
        <div className={`${strip} pr-[2px]`}>
          <StripTool label="Select"><SelectCursor /></StripTool>
          <StripTool label="Select nets" active><SelectNet /></StripTool>
          <StripSep />
          <StripTool label="Add stars"><Stars /></StripTool>
          <StripSep />
          <StripTool label="Trace output"><GateOut /></StripTool>
          <StripTool label="Trace input"><GateIn /></StripTool>
          <StripSep />
          <StripTool label="Push"><PushIn /></StripTool>
          <StripTool label="Pop"><PopOut /></StripTool>
          <StripTool label="Show block"><Chip /></StripTool>
          <StripTool label="Hide block"><Chip cross /></StripTool>
          <StripSep />
          <StripTool label="Buffers"><Buffer /></StripTool>
          <StripTool label="Pin names"><LabelPin /></StripTool>
          <StripSep />
          <StripTool label="Up one level"><UpArrow /></StripTool>
          <StripTool label="Back"><Back /></StripTool>
          <MoreDown />
        </div>
        <div className="relative flex min-w-0 flex-1 items-center justify-center overflow-hidden border border-[#a39c95] bg-white pt-[2px]">
          <Schematic />
          <div className="absolute top-[397px] right-[88px]">
            <Svg size="h-5 w-[14px]" box="0 0 14 20">
              <path d="M1.500 1v16l3.700-3.500L7.500 19l2.700-1.200-2.500-5.300h5z" fill="#fff" stroke="#000" strokeWidth="1.200" />
            </Svg>
          </div>
        </div>
      </div>
      <div role="tablist" className="mt-px flex h-[28px] shrink-0 items-start border-t border-[#8f8882]">
        <DocTab icon={<Sigma />}>Design Summary (Synthesized)</DocTab>
        <DocTab icon={<Stars />}>pipe_debugger.ngr:1</DocTab>
        <DocTab icon={<AppIcon />} active>pipe_debugger (RTL6)</DocTab>
      </div>
    </main>
  );
}

function CategoryDock() {
  return (
    <section className="flex shrink-0 flex-col">
      <DockTitle>View by Category</DockTitle>
      <div className="flex h-[156px]">
        <div className="flex flex-1 flex-col px-1">
          <h3 className="h-[25px] pt-px text-center font-bold">Design Objects of decode_instance</h3>
          <div className="grid h-[131px] grid-cols-3 gap-[6px]">
            <div className={frame}>
              <SortHeader>Instances</SortHeader>
              <ul role="tree">
                <li className="flex h-[18px] items-center">
                  <Branch lines="ur" />
                  <span className="mr-[6px] ml-1"><Instance /></span>mux1
                </li>
              </ul>
            </div>
            <div className={frame}><SortHeader>Pins</SortHeader></div>
            <div className={frame}><SortHeader>Signals</SortHeader></div>
          </div>
        </div>
        <GripV />
        <div className="flex flex-1 flex-col px-1">
          <h3 className="h-[25px] pt-px text-center font-bold">Properties: (No Selection)</h3>
          <div className={`${frame} h-[131px]`}>
            <table className="w-full table-fixed border-collapse">
              <thead>
                <tr className="h-[27px] border-b border-[#a39c95] bg-linear-to-b from-[#efebe7] from-80% to-[#e2dcd5] text-left">
                  <th className="p-0 pt-px pl-[5px] font-normal">
                    <span className="flex h-5 items-center border-r border-[#c3beb8] pr-2">
                      <span className="flex-1">Name</span>
                      <Svg size="h-[7px] w-[9px]" box="0 0 9 7">
                        <path d="M.8 5.500l3.700-3.500 3.700 3.500" stroke="#000" strokeWidth="2.200" />
                      </Svg>
                    </span>
                  </th>
                  <th className="p-0 pt-px pr-px pl-[5px] font-normal">
                    <span className="flex h-5 items-center border-r border-[#c3beb8]">Value</span>
                  </th>
                </tr>
              </thead>
            </table>
          </div>
        </div>
      </div>
      <div role="tablist" className="mt-1 flex h-[26px] items-start border-t border-[#8f8882]">
        <Tab icon={<ConsoleIcon />}>Console</Tab>
        <Tab icon={<ErrorIcon />}>Errors</Tab>
        <Tab icon={<Warning />}>Warnings</Tab>
        <Tab icon={<GridIcon />} active>View by Category</Tab>
      </div>
    </section>
  );
}

export default function App() {
  return (
    <div className="flex h-screen flex-col overflow-hidden bg-[#efebe7] font-['DejaVu_Sans',sans-serif] text-[13px] leading-[18px] text-[#1a1a1a]">
      <MenuBar />
      <ToolBar />
      <div className="flex min-h-0 flex-1">
        <LeftDock />
        <GripV />
        <Workspace />
      </div>
      <GripH />
      <CategoryDock />
      <footer className="flex h-[23px] shrink-0 items-center justify-end pr-[4px]">[784,516]</footer>
    </div>
  );
}
